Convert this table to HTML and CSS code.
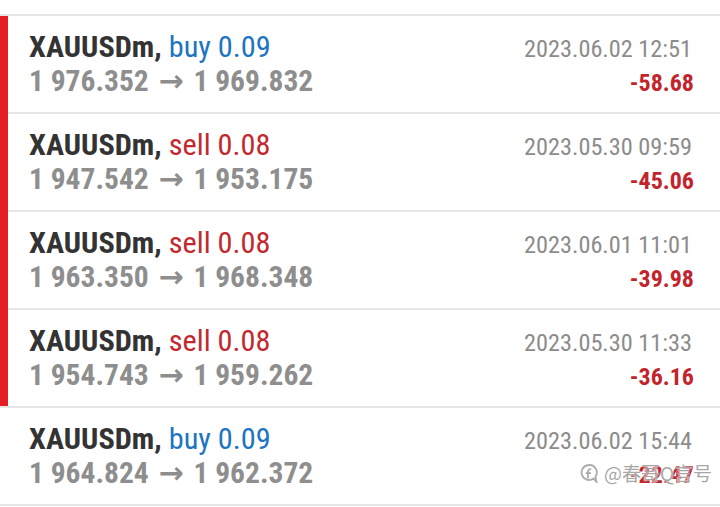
FILE: index.html
```html
<!DOCTYPE html>
<html lang="zh">
<head>
<meta charset="utf-8">
<title>Deals</title>
<link rel="stylesheet" href="styles.css">
</head>
<body>
<div class="list">
  <div class="group">
    <div class="bar"></div>
    <div class="rows">
      <div class="row first">
        <div class="left">
          <div class="title"><b>XAUUSDm,</b> <span class="buy">buy 0.09</span></div>
          <div class="prices">1 976.352 <span class="arrow">→</span> 1 969.832</div>
        </div>
        <div class="right">
          <div class="date">2023.06.02 12:51</div>
          <div class="profit">-58.68</div>
        </div>
      </div>
      <div class="row">
        <div class="left">
          <div class="title"><b>XAUUSDm,</b> <span class="sell">sell 0.08</span></div>
          <div class="prices">1 947.542 <span class="arrow">→</span> 1 953.175</div>
        </div>
        <div class="right">
          <div class="date">2023.05.30 09:59</div>
          <div class="profit">-45.06</div>
        </div>
      </div>
      <div class="row">
        <div class="left">
          <div class="title"><b>XAUUSDm,</b> <span class="sell">sell 0.08</span></div>
          <div class="prices">1 963.350 <span class="arrow">→</span> 1 968.348</div>
        </div>
        <div class="right">
          <div class="date">2023.06.01 11:01</div>
          <div class="profit">-39.98</div>
        </div>
      </div>
      <div class="row">
        <div class="left">
          <div class="title"><b>XAUUSDm,</b> <span class="sell">sell 0.08</span></div>
          <div class="prices">1 954.743 <span class="arrow">→</span> 1 959.262</div>
        </div>
        <div class="right">
          <div class="date">2023.05.30 11:33</div>
          <div class="profit">-36.16</div>
        </div>
      </div>
    </div>
  </div>
  <div class="group plain">
    <div class="bar"></div>
    <div class="rows">
      <div class="row first">
        <div class="left">
          <div class="title"><b>XAUUSDm,</b> <span class="buy">buy 0.09</span></div>
          <div class="prices">1 964.824 <span class="arrow">→</span> 1 962.372</div>
        </div>
        <div class="right">
          <div class="date">2023.06.02 15:44</div>
          <div class="profit">-22.47</div>
        </div>
      </div>
    </div>
    <div class="watermark">
      <svg class="wm-icon" width="18" height="20" viewBox="0 0 18 20"><path d="M9 2 A7.5 7.5 0 1 0 13.4 15.6 L16.4 18.6 L15.4 13.8 A7.5 7.5 0 0 0 9 2 Z" fill="none" stroke="#ababab" stroke-width="1.8"/><path d="M11.2 6.2 C9 5.9 8 7.2 8 9 L8 15.5 M5.8 10.2 L11 10.2" fill="none" stroke="#ababab" stroke-width="1.8"/></svg>
      <span class="wm-text">@春哥Q言号</span>
    </div>
  </div>
</div>
</body>
</html>
```
FILE: styles.css
```css
html, body {
  margin: 0;
  padding: 0;
  background: #ffffff;
}
body {
  width: 720px;
  height: 507px;
  overflow: hidden;
  font-family: "Roboto Condensed", Roboto, "Liberation Sans", sans-serif;
  font-stretch: condensed;
}
.list {
  padding-top: 14px;
  border-bottom: 2px solid #e6e6e6;
}
.group {
  display: flex;
  border-top: 2px solid #e6e6e6;
  position: relative;
}
.bar {
  width: 8px;
  flex: none;
  background: #e31e24;
}
.plain .bar {
  background: transparent;
}
.rows {
  flex: 1;
}
.row {
  display: flex;
  justify-content: space-between;
  height: 96px;
  border-top: 2px solid #e6e6e6;
  padding: 0 28px 0 21px;
}
.row.first {
  border-top: none;
}
.left {
  padding-top: 14px;
}
.title {
  font-size: 30.3px;
  line-height: 34px;
  color: #333333;
  white-space: nowrap;
}
.title b {
  font-weight: 700;
}
.buy {
  color: #1d74c2;
}
.sell {
  color: #c3282e;
}
.prices {
  font-size: 29.5px;
  line-height: 34px;
  font-weight: 700;
  color: #8e8e8e;
  white-space: nowrap;
}
.arrow {
  font-family: Roboto, "DejaVu Sans", sans-serif;
  font-stretch: normal;
  font-weight: 700;
  font-size: 30px;
  margin: 0 3px;
}
.right {
  display: flex;
  flex-direction: column;
  align-items: flex-end;
  padding-top: 16px;
}
.date {
  font-size: 24.3px;
  line-height: 34px;
  color: #8c8c8c;
}
.profit {
  font-size: 24px;
  line-height: 34px;
  font-weight: 700;
  color: #c3242c;
  margin-right: -2px;
}
.watermark {
  position: absolute;
  right: 8px;
  bottom: 19px;
  display: flex;
  align-items: center;
  gap: 6px;
}
.wm-icon {
  display: block;
}
.wm-text {
  font-family: "Noto Sans CJK SC", sans-serif;
  font-size: 19px;
  line-height: 24px;
  color: rgba(150, 150, 150, 0.85);
  text-shadow: 0 0 2px #ffffff, 0 0 1px #ffffff;
}
```
